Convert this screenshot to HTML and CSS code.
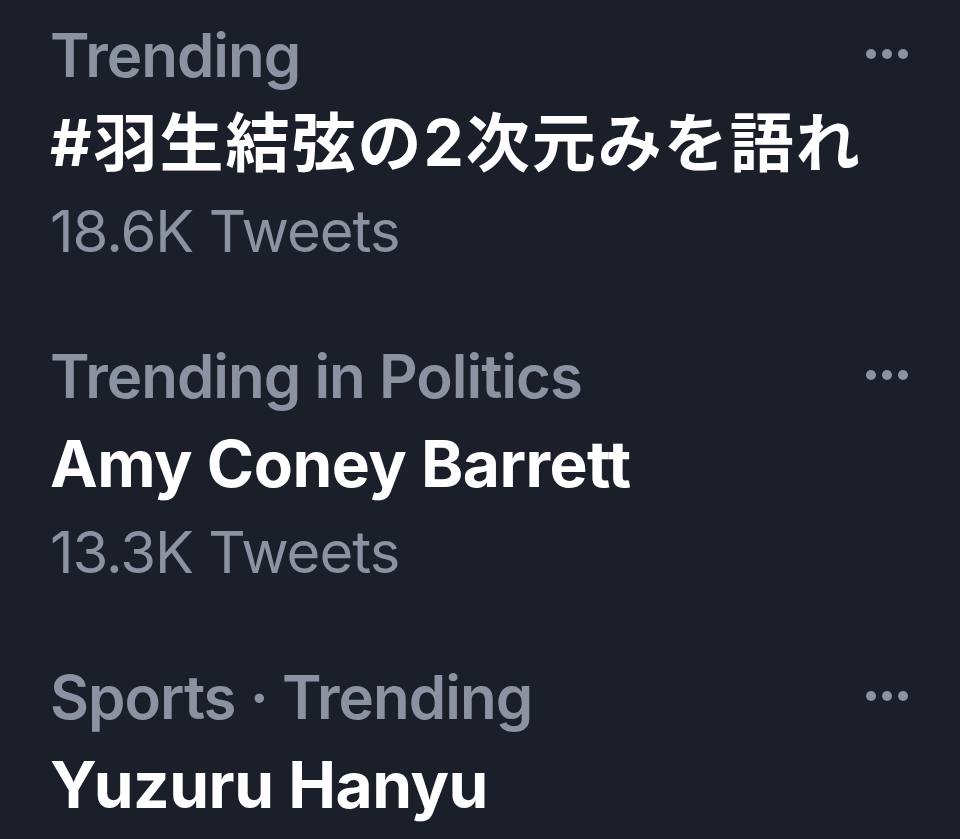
FILE: index.html
```html
<!DOCTYPE html>
<html lang="en">
<head>
    <meta charset="UTF-8">
    <meta name="viewport" content="width=device-width, initial-scale=1.0">
    <title>Trends</title>
    <link rel="stylesheet" href="styles.css">
</head>
<body>
    <div class="trends">
        <div class="trend">
            <div class="info">
                <div class="label">Trending</div>
                <div class="title ja" lang="ja">#羽生結弦の2次元みを語れ</div>
                <div class="meta">18.6K Tweets</div>
            </div>
            <div class="more"><span></span><span></span><span></span></div>
        </div>
        <div class="trend">
            <div class="info">
                <div class="label">Trending in Politics</div>
                <div class="title">Amy Coney Barrett</div>
                <div class="meta">13.3K Tweets</div>
            </div>
            <div class="more"><span></span><span></span><span></span></div>
        </div>
        <div class="trend">
            <div class="info">
                <div class="label">Sports · Trending</div>
                <div class="title">Yuzuru Hanyu</div>
            </div>
            <div class="more"><span></span><span></span><span></span></div>
        </div>
    </div>
</body>
</html>
```

FILE: styles.css
```css
body {
    margin: 0;
    padding: 0;
    background: #1a1f2a;
    font-family: Inter, "Noto Sans CJK JP", sans-serif;
    overflow: hidden;
}

.trends {
    padding: 11px 52px 0 50px;
}

.trend {
    display: flex;
    justify-content: space-between;
    align-items: flex-start;
    margin-bottom: 57px;
}

.info {
    display: flex;
    flex-direction: column;
}

.label {
    color: #8b93a3;
    font-size: 60px;
    font-weight: 600;
    line-height: 88px;
    letter-spacing: -1px;
}

.title {
    color: #ffffff;
    font-size: 64px;
    font-weight: 700;
    line-height: 88px;
    height: 88px;
    letter-spacing: -0.5px;
}

.title.ja {
    letter-spacing: 2px;
}

.meta {
    color: #8b93a3;
    font-size: 58px;
    font-weight: 400;
    line-height: 88px;
    letter-spacing: -1px;
}

.more {
    display: flex;
    gap: 6px;
    margin-top: 38px;
}

.more span {
    width: 10px;
    height: 10px;
    border-radius: 50%;
    background: #8b93a3;
}
```
